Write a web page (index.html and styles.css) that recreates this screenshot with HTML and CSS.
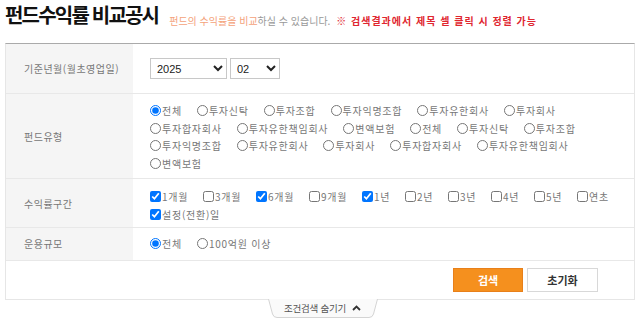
FILE: index.html
```html
<!DOCTYPE html>
<html lang="ko">
<head>
<meta charset="utf-8">
<link rel="stylesheet" href="styles.css">
</head>
<body>
<div class="page">
  <header class="head">
    <h1 class="title">펀드수익률 비교공시</h1>
    <p class="desc"><span class="hl">펀드의 수익률을 비교</span>하실 수 있습니다. <em class="warn">※ 검색결과에서 제목 셀 클릭 시 정렬 가능</em></p>
  </header>
  <div class="box">
    <div class="row r1">
      <div class="lab">기준년월(월초영업일)</div>
      <div class="val">
        <select class="sel sel-y"><option>2025</option></select>
        <select class="sel sel-m"><option>02</option></select>
      </div>
    </div>
    <div class="row r2">
      <div class="lab">펀드유형</div>
      <div class="val opts">
        <label class="opt"><input type="radio" name="t" checked>전체</label>
        <label class="opt"><input type="radio" name="t">투자신탁</label>
        <label class="opt"><input type="radio" name="t">투자조합</label>
        <label class="opt"><input type="radio" name="t">투자익명조합</label>
        <label class="opt"><input type="radio" name="t">투자유한회사</label>
        <label class="opt"><input type="radio" name="t">투자회사</label>
        <label class="opt"><input type="radio" name="t">투자합자회사</label>
        <label class="opt"><input type="radio" name="t">투자유한책임회사</label>
        <label class="opt"><input type="radio" name="t">변액보험</label>
        <label class="opt"><input type="radio" name="t">전체</label>
        <label class="opt"><input type="radio" name="t">투자신탁</label>
        <label class="opt"><input type="radio" name="t">투자조합</label>
        <label class="opt"><input type="radio" name="t">투자익명조합</label>
        <label class="opt"><input type="radio" name="t">투자유한회사</label>
        <label class="opt"><input type="radio" name="t">투자회사</label>
        <label class="opt"><input type="radio" name="t">투자합자회사</label>
        <label class="opt"><input type="radio" name="t">투자유한책임회사</label>
        <label class="opt"><input type="radio" name="t">변액보험</label>
      </div>
    </div>
    <div class="row r3">
      <div class="lab">수익률구간</div>
      <div class="val opts">
        <label class="opt chk mo"><input type="checkbox" checked>1개월</label>
        <label class="opt chk mo"><input type="checkbox">3개월</label>
        <label class="opt chk mo"><input type="checkbox" checked>6개월</label>
        <label class="opt chk mo"><input type="checkbox">9개월</label>
        <label class="opt chk yr"><input type="checkbox" checked>1년</label>
        <label class="opt chk yr"><input type="checkbox">2년</label>
        <label class="opt chk yr"><input type="checkbox">3년</label>
        <label class="opt chk yr"><input type="checkbox">4년</label>
        <label class="opt chk yr"><input type="checkbox">5년</label>
        <label class="opt chk yr"><input type="checkbox">연초</label>
        <label class="opt chk"><input type="checkbox" checked>설정(전환)일</label>
      </div>
    </div>
    <div class="row r4">
      <div class="lab">운용규모</div>
      <div class="val opts">
        <label class="opt"><input type="radio" name="s" checked>전체</label>
        <label class="opt"><input type="radio" name="s">100억원 이상</label>
      </div>
    </div>
    <div class="btns">
      <button class="btn btn-search">검색</button>
      <button class="btn btn-reset">초기화</button>
    </div>
  </div>
  <div class="tabwrap">
    <div class="tab">
      <svg class="tab-bg" width="110" height="19" viewBox="0 0 110 19" aria-hidden="true">
        <path d="M0.5 0 L4.5 15 Q5.5 18.5 9 18.5 L101 18.5 Q104.5 18.5 105.5 15 L109.5 0" fill="#fafafa" stroke="#d4d4d4" stroke-width="1"/>
      </svg>
      <span class="tab-text">조건검색 숨기기</span>
      <svg class="tab-ico" width="9" height="6" viewBox="0 0 9 6" aria-hidden="true">
        <path d="M1 5 L4.5 1.5 L8 5" fill="none" stroke="#333" stroke-width="1.8"/>
      </svg>
    </div>
  </div>
</div>
</body>
</html>
```

FILE: styles.css
```css
* { box-sizing: border-box; }
html, body { margin: 0; padding: 0; background: #fff; }
body {
  font-family: "Noto Sans CJK KR", "Noto Sans", sans-serif;
  color: #666;
}
.page { width: 640px; padding: 0 5px; }

.head {
  display: flex;
  align-items: flex-start;
  height: 43px;
}
.title {
  margin: 0;
  font-size: 20px;
  line-height: 29px;
  font-weight: 700;
  color: #111;
  letter-spacing: -1.8px;
}
.desc {
  margin: 14px 0 0 11px;
  font-size: 10px;
  line-height: 14px;
  color: #999;
  letter-spacing: 0;
}
.hl { color: #f4a27a; }
.warn {
  font-style: normal;
  color: #e0262f;
  font-weight: 700;
  letter-spacing: 1px;
  margin-left: 3px;
}

.box {
  border-top: 1px solid #aaa;
  border-left: 1px solid #e6e6e6;
  border-right: 1px solid #e6e6e6;
  border-bottom: 1px solid #e6e6e6;
}
.row {
  display: flex;
  border-bottom: 1px solid #e8e8e8;
}
.lab {
  flex: 0 0 127px;
  background: #f5f5f5;
  display: flex;
  align-items: center;
  padding-left: 18px;
  font-size: 10px;
  color: #777;
  letter-spacing: 0.5px;
}
.val {
  flex: 1;
  padding-left: 17px;
  padding-right: 8px;
}
.r1 .val { display: flex; align-items: center; gap: 3px; height: 49px; padding-top: 0; }
.sel {
  height: 21px;
  border: 1px solid #c8c8c8;
  border-radius: 0;
  background: #fff;
  font-family: "Liberation Sans", Arial, sans-serif;
  font-size: 11px;
  color: #222;
  padding: 0 2px;
}
.sel-y { width: 77px; }
.sel-m { width: 50px; }

.opts {
  display: flex;
  flex-wrap: wrap;
  align-content: flex-start;
  font-size: 10px;
  line-height: 17.5px;
  color: #777;
}
.opt {
  display: inline-flex;
  align-items: center;
  margin-right: 15px;
  white-space: nowrap;
  letter-spacing: 0.75px;
}
.opt input {
  width: 11px;
  height: 11px;
  margin: 0 1px 0 0;
}
.chk input { margin-right: 1px; }
.mo { width: 53px; margin-right: 0; }
.yr { width: 43px; margin-right: 0; }
.r2 .val { padding-top: 8px; padding-bottom: 6px; }
.r3 .val { padding-top: 9px; padding-bottom: 4px; }
.r4 .val { padding-top: 7px; padding-bottom: 7px; }

.btns {
  display: flex;
  justify-content: flex-end;
  gap: 4px;
  padding: 7px 36px 7px 0;
}
.btn {
  height: 24px;
  font-family: "Noto Sans CJK KR", sans-serif;
  font-size: 11px;
  border-radius: 0;
  padding: 0;
  cursor: pointer;
}
.btn-search {
  width: 70px;
  background: #f5901e;
  border: 1px solid #e8801a;
  color: #fff;
  font-weight: 700;
}
.btn-reset {
  width: 71px;
  background: #fff;
  border: 1px solid #d8d8d8;
  color: #333;
  font-weight: 700;
}

.tabwrap {
  display: flex;
  justify-content: center;
  padding-left: 5px;
}
.tab {
  position: relative;
  width: 110px;
  height: 19px;
  display: flex;
  align-items: center;
  justify-content: center;
  gap: 6px;
  margin-top: -1px;
  padding-bottom: 1px;
}
.tab-bg { position: absolute; left: 0; top: 0; }
.tab-text {
  position: relative;
  font-size: 9.5px;
  color: #555;
  letter-spacing: -0.2px;
}
.tab-ico { position: relative; }
```
